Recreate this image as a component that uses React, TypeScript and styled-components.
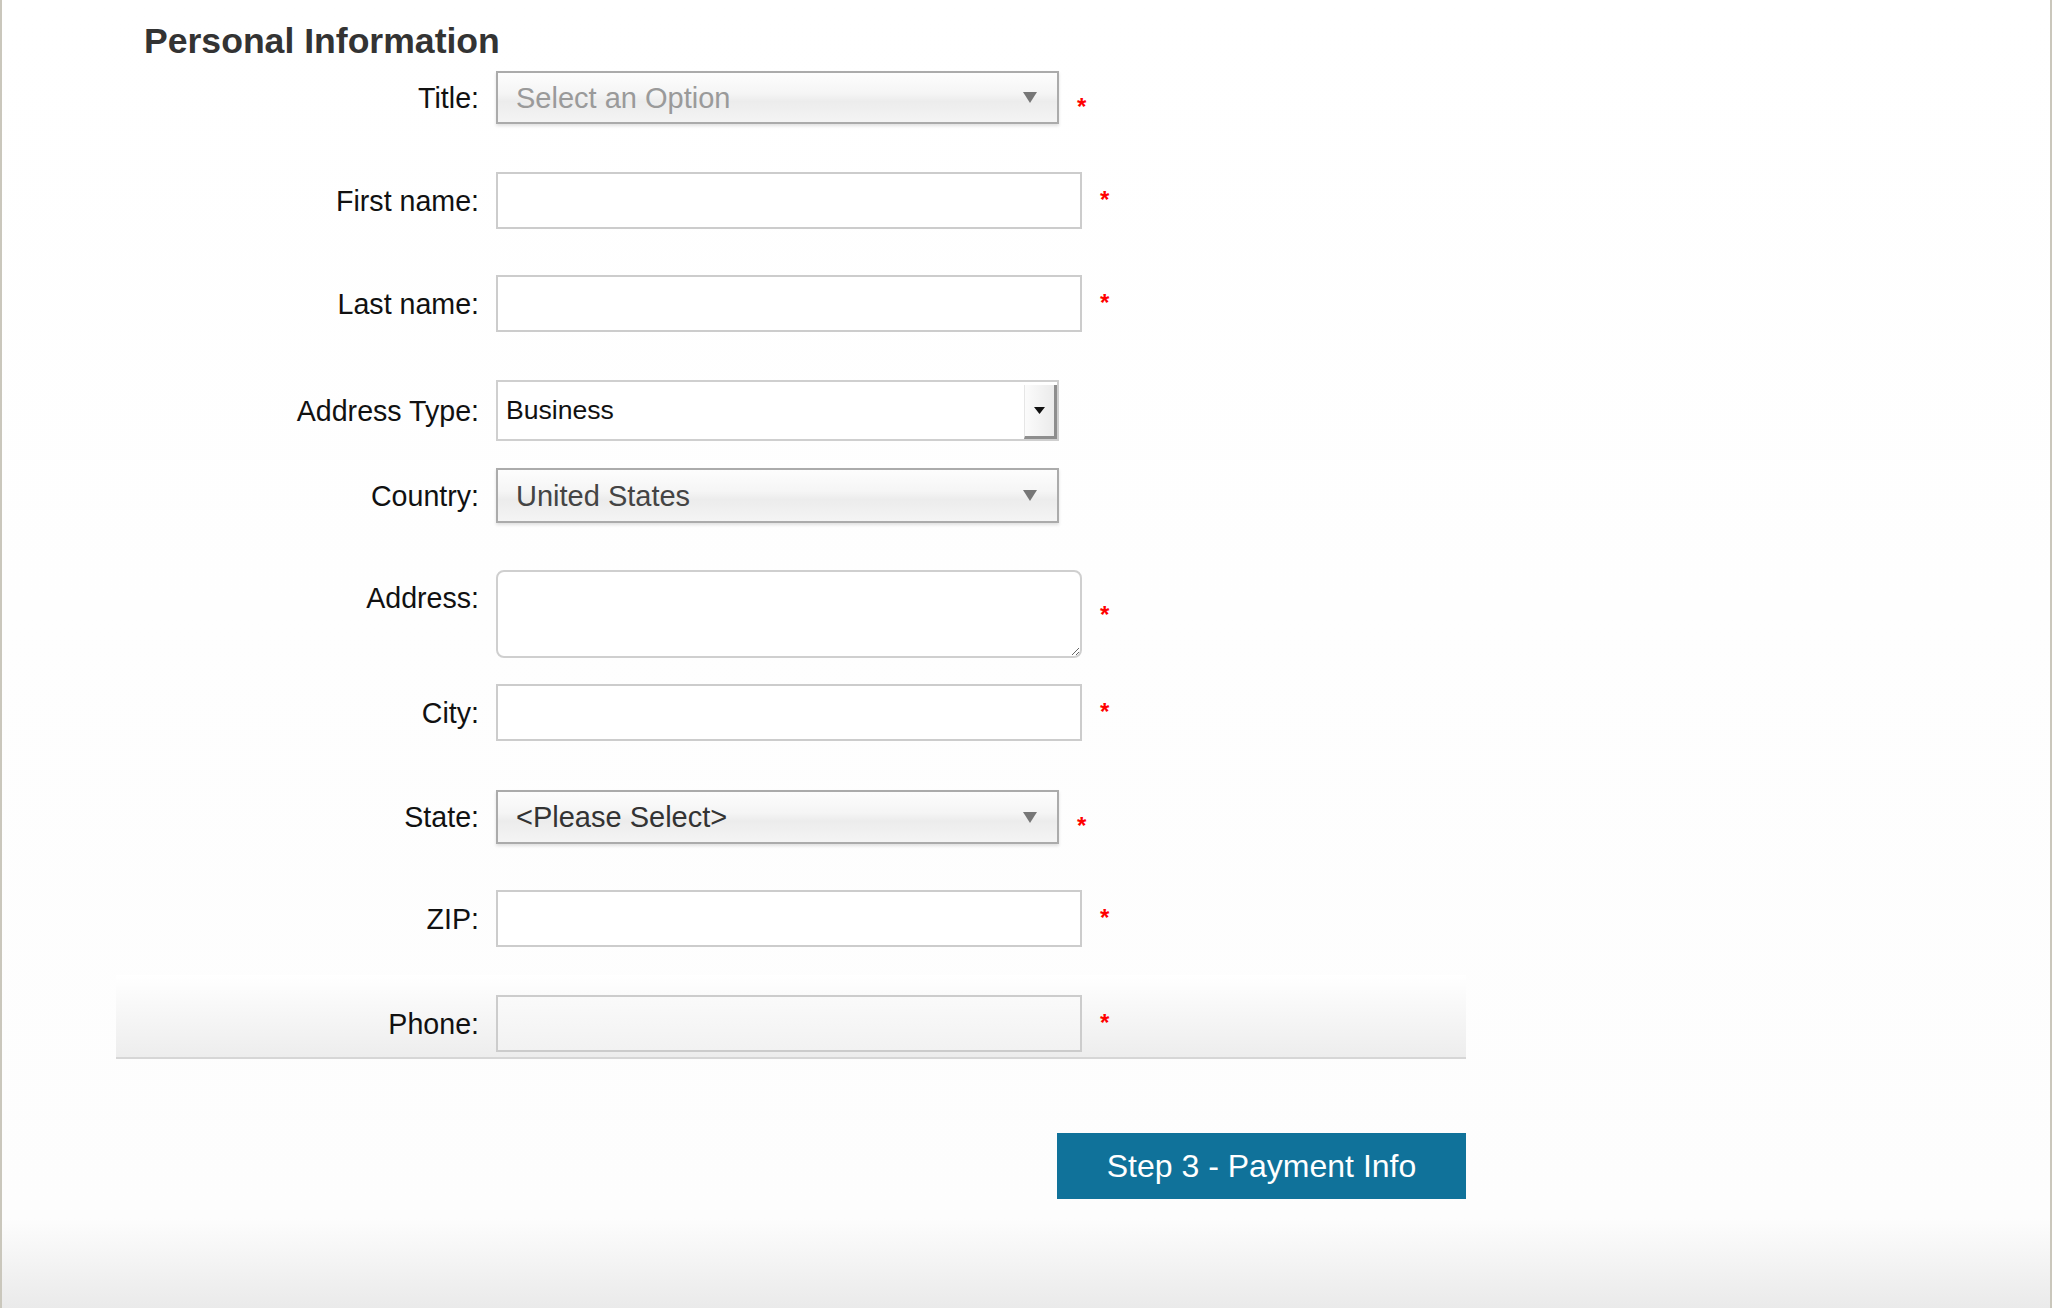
import React from "react";
import styled, { createGlobalStyle } from "styled-components";

const Global = createGlobalStyle`
  html, body { margin: 0; padding: 0; background: #fff; }
  body { font-family: "Liberation Sans", Arial, Helvetica, sans-serif; }
  * { box-sizing: border-box; }
`;

const Page = styled.div`
  min-height: 100vh;
  border-left: 2px solid #cac7bc;
  border-right: 2px solid #cac7bc;
  background: linear-gradient(to bottom, #ffffff 0%, #fdfdfd calc(100% - 90px), #eaeaea 100%);
  padding: 21px 0 0 114px;
`;

const Container = styled.div`
  width: 1350px;
  display: flex;
  flex-direction: column;
`;

const Heading = styled.h2`
  margin: 0 0 10px 28px;
  font: bold 35.6px/40px "Liberation Sans", Arial, sans-serif;
  color: #333;
`;

const Row = styled.div<{ $after?: number }>`
  display: flex;
  align-items: center;
  margin-bottom: ${(p) => p.$after ?? 0}px;
`;

const Label = styled.label<{ $top?: boolean }>`
  flex-shrink: 0;
  width: 363px;
  margin-right: 17px;
  text-align: right;
  font-size: 28.6px;
  line-height: 32px;
  color: #111;
  align-self: ${(p) => (p.$top ? "flex-start" : "center")};
  margin-top: ${(p) => (p.$top ? "12px" : "0")};
`;

const TextInput = styled.input<{ $flat?: boolean }>`
  width: 586px;
  height: 57px;
  border: 2px solid #cccccc;
  background: ${(p) => (p.$flat ? "linear-gradient(#fafafa, #f2f2f2)" : "#fff")};
  font: 28px "Liberation Sans", Arial, sans-serif;
  padding: 0 10px;
  outline: none;
`;

const TextArea = styled.textarea`
  width: 586px;
  height: 88px;
  border: 2px solid #cfcfcf;
  border-radius: 8px;
  background: #fff;
  font: 28px "Liberation Sans", Arial, sans-serif;
  padding: 8px 10px;
  resize: vertical;
  outline: none;
`;

const SelectBox = styled.div<{ $h: number }>`
  width: 563px;
  height: ${(p) => p.$h}px;
  display: flex;
  align-items: center;
  justify-content: space-between;
  padding: 0 20px 0 18px;
  border: 2px solid #ababab;
  background: linear-gradient(#fdfdfd 0%, #f5f5f5 42%, #ececec 58%, #f4f4f4 100%);
  box-shadow: 0 2px 3px rgba(0, 0, 0, 0.12);
`;

const SelectValue = styled.span<{ $color: string }>`
  font-size: 29px;
  line-height: 32px;
  color: ${(p) => p.$color};
`;

const NativeSelect = styled.div`
  width: 563px;
  height: 61px;
  display: flex;
  align-items: stretch;
  border: 2px solid #cfcfcf;
  background: #fff;
`;

const NativeValue = styled.span`
  flex: 1;
  display: flex;
  align-items: center;
  padding-left: 8px;
  font-size: 26.6px;
  color: #111;
`;

const DropButton = styled.span`
  width: 33px;
  margin-top: 3px;
  display: flex;
  align-items: center;
  justify-content: center;
  background: linear-gradient(to right, #fbfbfb, #ebebeb);
  border-left: 1px solid #e6e6e6;
  border-right: 3px solid #8e8e8e;
  border-bottom: 3px solid #8e8e8e;
`;

const Star = styled.span<{ $top: number }>`
  align-self: flex-start;
  margin-top: ${(p) => p.$top}px;
  margin-left: 18px;
  color: #f00;
  font-size: 24px;
  font-weight: bold;
  line-height: 24px;
`;

const Band = styled.div`
  margin-top: 28px;
  padding: 20px 0 5px;
  background: linear-gradient(#ffffff 0%, #f6f6f6 50%, #ededed 100%);
  border-bottom: 2px solid #d6d6d6;
`;

const Actions = styled.div`
  display: flex;
  justify-content: flex-end;
  margin-top: 74px;
`;

const PrimaryButton = styled.button`
  width: 409px;
  height: 66px;
  border: none;
  background: #10729a;
  color: #fff;
  font: 32px "Liberation Sans", Arial, sans-serif;
  cursor: pointer;
`;

const GrayArrow = () => (
  <svg width="14" height="11" viewBox="0 0 14 11">
    <path d="M0 0 H14 L7 11 Z" fill="#777" />
  </svg>
);

const BlackArrow = () => (
  <svg width="11" height="7" viewBox="0 0 11 7">
    <path d="M0 0 H11 L5.5 7 Z" fill="#111" />
  </svg>
);

const StyledSelect = ({ value, color, h }: { value: string; color: string; h: number }) => (
  <SelectBox $h={h}>
    <SelectValue $color={color}>{value}</SelectValue>
    <GrayArrow />
  </SelectBox>
);

export default function App() {
  return (
    <>
      <Global />
      <Page>
        <Container>
          <Heading>Personal Information</Heading>

          <Row $after={48}>
            <Label>Title:</Label>
            <StyledSelect value="Select an Option" color="#9a9a9a" h={53} />
            <Star $top={24}>*</Star>
          </Row>

          <Row $after={46}>
            <Label>First name:</Label>
            <TextInput />
            <Star $top={16}>*</Star>
          </Row>

          <Row $after={48}>
            <Label>Last name:</Label>
            <TextInput />
            <Star $top={16}>*</Star>
          </Row>

          <Row $after={27}>
            <Label>Address Type:</Label>
            <NativeSelect>
              <NativeValue>Business</NativeValue>
              <DropButton>
                <BlackArrow />
              </DropButton>
            </NativeSelect>
          </Row>

          <Row $after={47}>
            <Label>Country:</Label>
            <StyledSelect value="United States" color="#444" h={55} />
          </Row>

          <Row $after={26}>
            <Label $top>Address:</Label>
            <TextArea />
            <Star $top={33}>*</Star>
          </Row>

          <Row $after={49}>
            <Label>City:</Label>
            <TextInput />
            <Star $top={16}>*</Star>
          </Row>

          <Row $after={46}>
            <Label>State:</Label>
            <StyledSelect value="<Please Select>" color="#333" h={54} />
            <Star $top={24}>*</Star>
          </Row>

          <Row>
            <Label>ZIP:</Label>
            <TextInput />
            <Star $top={16}>*</Star>
          </Row>

          <Band>
            <Row>
              <Label>Phone:</Label>
              <TextInput $flat />
              <Star $top={16}>*</Star>
            </Row>
          </Band>

          <Actions>
            <PrimaryButton>Step 3 - Payment Info</PrimaryButton>
          </Actions>
        </Container>
      </Page>
    </>
  );
}
